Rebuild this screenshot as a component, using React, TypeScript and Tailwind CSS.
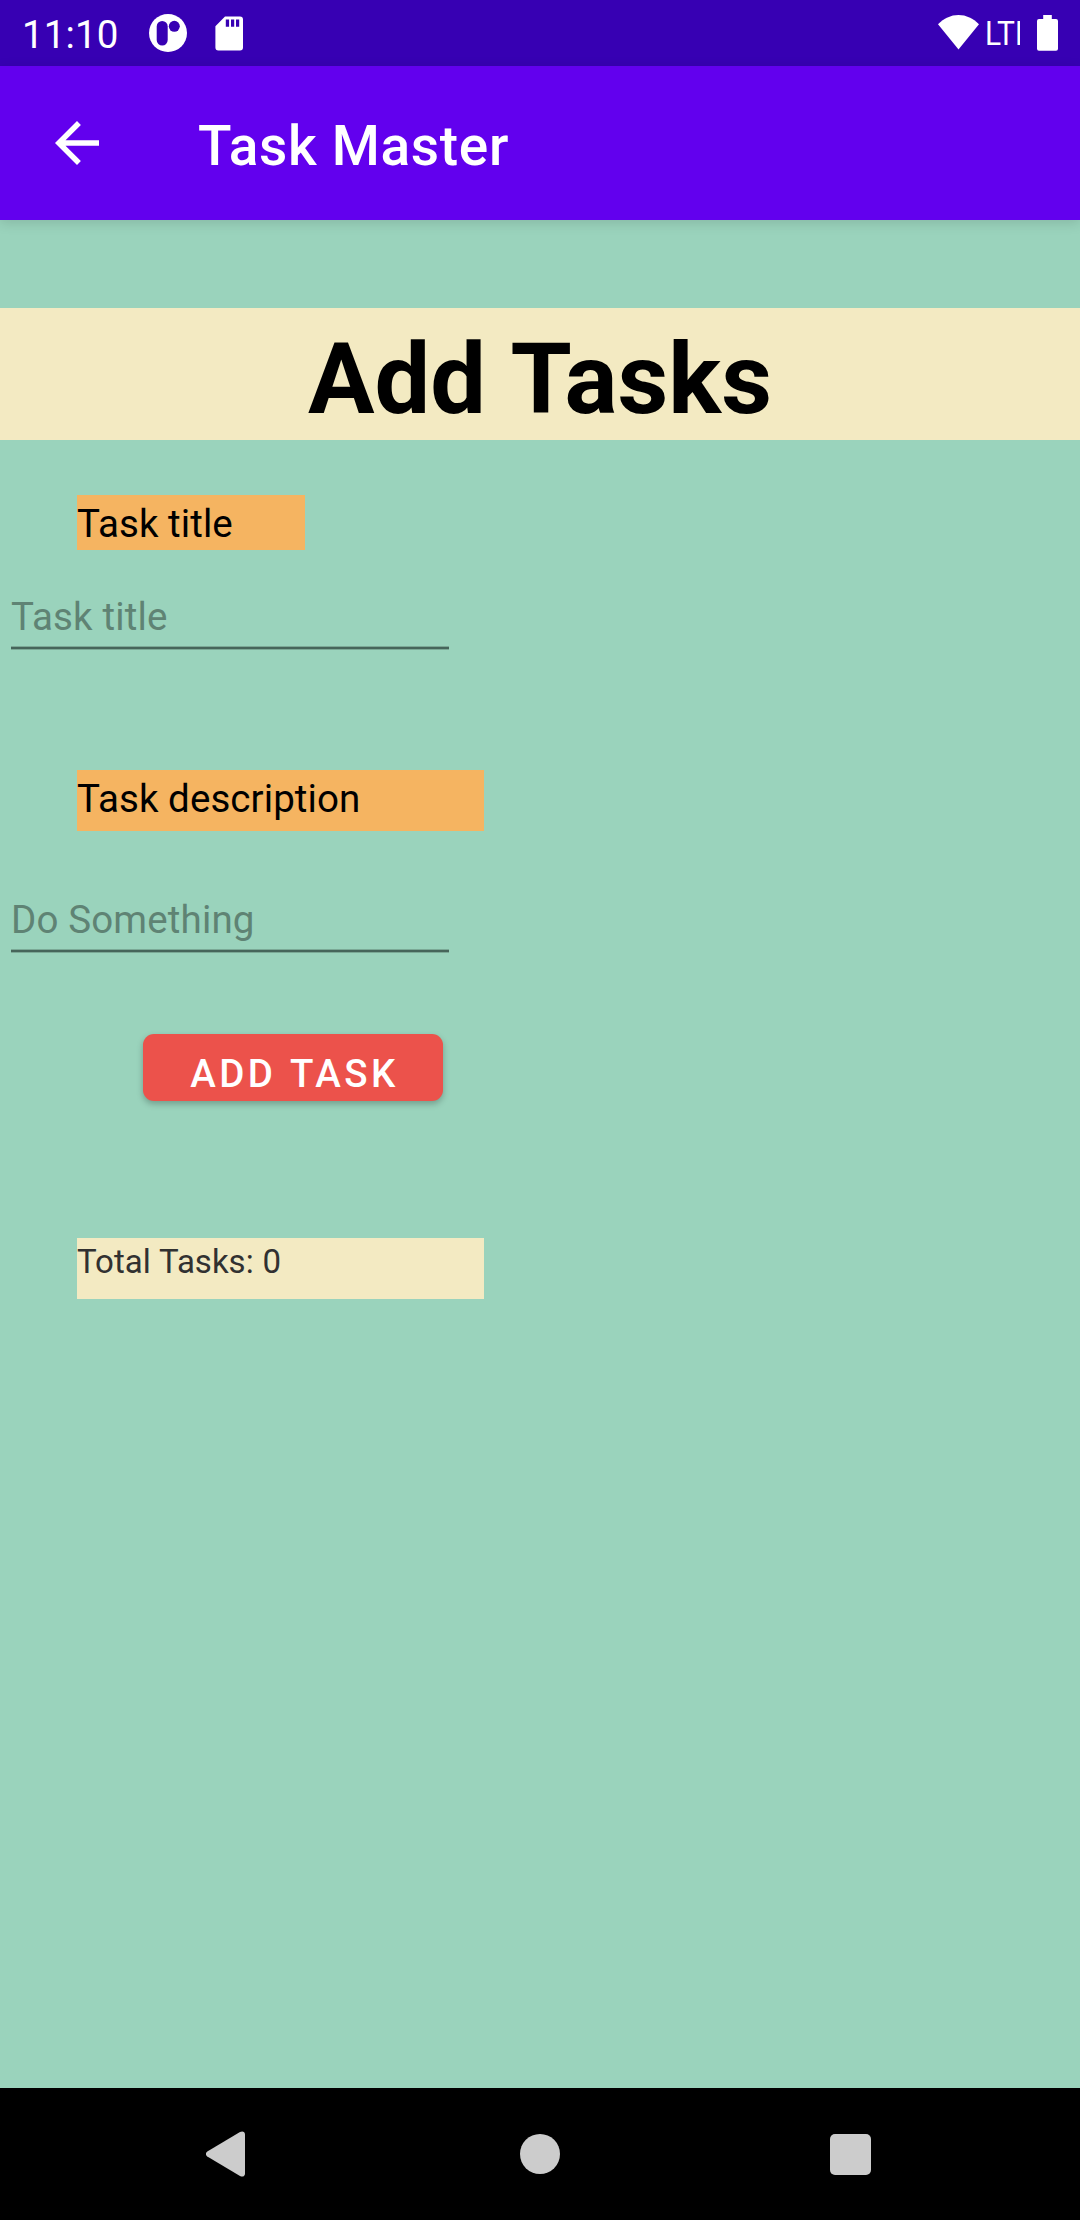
import { useState } from "react";

function StatusBar() {
  return (
    <header className="flex h-[66px] shrink-0 items-start bg-[#3700b3] text-white">
      <span className="ml-[22px] mt-[11px] w-[100px] whitespace-nowrap text-[38.5px] leading-[48px] tracking-[0.15px]">11:10</span>
      <svg className="ml-[27px] mt-[14px] size-[38px]" viewBox="0 0 38 38">
        <circle cx="19" cy="19" r="19" fill="#fff" />
        <rect x="7.7" y="7" width="11" height="24.6" rx="5.5" fill="#3700b3" />
        <circle cx="25.3" cy="12.3" r="5.5" fill="#3700b3" />
      </svg>
      <svg className="ml-[28px] mt-[16px] h-[35px] w-[28px]" viewBox="0 0 28 35">
        <path fill="#fff" fillRule="evenodd" d="M10 .4H25A3 3 0 0 1 28 3.4V31.5A3 3 0 0 1 25 34.5H3.4A3 3 0 0 1 .4 31.5V10.2ZM10.8 3.5V10.7H14.1V3.5ZM16 3.5V10.7H19.2V3.5ZM21 3.5V10.7H24.2V3.5Z" />
      </svg>
      <div className="ml-auto mr-[22px] flex">
        <svg className="mt-[15px] h-[35px] w-[41px]" viewBox="0 0 41 35">
          <path fill="#fff" d="M0 9.3C5.8 3.4 12.8 0 20.5 0S35.2 3.4 41 9.3L20.5 34.6Z" />
        </svg>
        <div className="ml-[6px] mt-[12px] w-[35px] overflow-hidden">
          <span className="inline-block origin-left scale-x-[0.88] whitespace-nowrap text-[34px] leading-[42px]">LTE</span>
        </div>
        <svg className="ml-[17px] mt-[15px] h-[36px] w-[21px]" viewBox="0 0 21 36">
          <path fill="#fff" d="M6.2 0H14.8V4H19A2 2 0 0 1 21 6V33.8A2 2 0 0 1 19 35.8H2A2 2 0 0 1 0 33.8V6A2 2 0 0 1 2 4H6.2Z" />
        </svg>
      </div>
    </header>
  );
}

function AppBar() {
  return (
    <div className="z-10 flex h-[154px] shrink-0 items-center bg-[#6200ee] text-white shadow-[0_3px_12px_rgba(0,0,0,0.13)]">
      <button aria-label="Back" className="ml-[44px] size-[66px]">
        <svg viewBox="0 0 24 24" fill="currentColor">
          <path d="M20 11H7.83l5.59-5.59L12 4l-8 8 8 8 1.41-1.41L7.83 13H20v-2z" />
        </svg>
      </button>
      <h1 className="ml-[88px] mt-[6px] text-[55px] leading-[64px] font-medium tracking-[0.0125em]">Task Master</h1>
    </div>
  );
}

function Field({ placeholder, className }: { placeholder: string; className: string }) {
  const [value, setValue] = useState("");
  return (
    <div className={"ml-[11px] w-[438px] " + className}>
      <input
        value={value}
        onChange={(e) => setValue(e.target.value)}
        placeholder={placeholder}
        className="block h-[60px] w-full bg-transparent text-[38.5px] tracking-[0.15px] text-black outline-none placeholder:text-[#5f8374] placeholder:opacity-100"
      />
      <div className="h-[4px] border-y border-[#7ba996] bg-[#46655a]" />
    </div>
  );
}

function NavigationBar() {
  return (
    <nav className="flex h-[132px] shrink-0 items-center bg-black text-[#cccccc]">
      <svg className="ml-[206px] h-[46px] w-[39px]" viewBox="0 0 39 46" fill="currentColor">
        <path d="M1.3 20.6 34 1.1C36.5-.3 39 .8 39 3.6V42.4C39 45.2 36.5 46.3 34 44.9L1.3 25.4C-.6 24.2-.6 21.8 1.3 20.6Z" />
      </svg>
      <div className="ml-[275px] size-[40px] rounded-full bg-[#cccccc]" />
      <div className="ml-[270px] size-[41px] rounded-[5px] bg-[#cccccc]" />
    </nav>
  );
}

export default function App() {
  return (
    <div className="flex h-[2220px] w-[1080px] flex-col overflow-hidden bg-[#9ad3bc] font-[Roboto,sans-serif] text-black">
      <StatusBar />
      <AppBar />
      <main className="flex flex-1 flex-col items-start">
        <h2 className="mt-[88px] h-[132px] w-full bg-[#f3eac2] text-center text-[99px] leading-[142px] font-bold [word-spacing:2.5px]">Add Tasks</h2>
        <div className="ml-[77px] mt-[55px] h-[55px] w-[228px] bg-[#f5b461] text-[38.5px] leading-[58px] tracking-[0.08px]">Task title</div>
        <Field placeholder="Task title" className="mt-[36px]" />
        <div className="ml-[77px] mt-[120px] h-[61px] w-[407px] bg-[#f5b461] text-[38.5px] leading-[58px] tracking-[0.08px]">Task description</div>
        <Field placeholder="Do Something" className="mt-[58px]" />
        <button className="ml-[143px] mt-[81px] h-[67px] w-[300px] rounded-[11px] bg-[#ec524b] pl-[3px] pt-[12px] text-[38.5px] leading-[55px] font-medium tracking-[0.0893em] text-white shadow-[0_3px_6px_rgba(0,0,0,0.25)] [word-spacing:1.5px]">ADD TASK</button>
        <div className="ml-[77px] mt-[137px] h-[61px] w-[407px] bg-[#f3eac2] text-[33px] leading-[47px] text-[#313131] [word-spacing:0.8px]">Total Tasks: 0</div>
      </main>
      <NavigationBar />
    </div>
  );
}
